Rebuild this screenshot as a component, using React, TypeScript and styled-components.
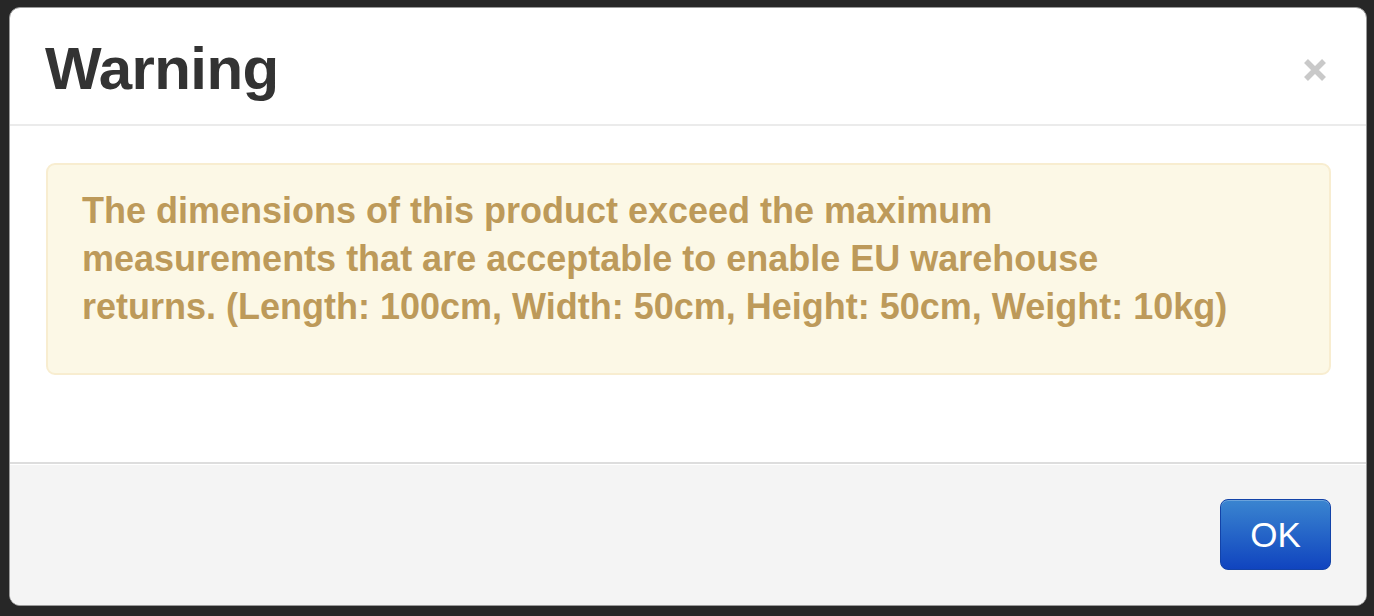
import styled, { createGlobalStyle } from 'styled-components';

const GlobalStyle = createGlobalStyle`
  html, body {
    margin: 0;
    padding: 0;
    background: #272727;
    font-family: "Liberation Sans", Arial, sans-serif;
  }
`;

const lines = [
  'The dimensions of this product exceed the maximum',
  'measurements that are acceptable to enable EU warehouse',
  'returns. (Length: 100cm, Width: 50cm, Height: 50cm, Weight: 10kg)',
];

const App = () => {
  return (
    <>
      <GlobalStyle />
      <Dialog>
        <Header>
          <Title>Warning</Title>
          <CloseButton aria-label="close">
            <svg width="26" height="26" viewBox="0 0 26 26">
              <path d="M4 4 L22 22 M22 4 L4 22" stroke="#c9c9c9" strokeWidth="5.5" />
            </svg>
          </CloseButton>
        </Header>
        <Body>
          <Alert>
            {lines.map((line) => (
              <AlertLine key={line}>{line}</AlertLine>
            ))}
          </Alert>
        </Body>
        <Footer>
          <OkButton>OK</OkButton>
        </Footer>
      </Dialog>
    </>
  );
};

export default App;

const Dialog = styled.div`
  margin: 7px 7px 0 9px;
  width: 1358px;
  height: 599px;
  box-sizing: border-box;
  display: flex;
  flex-direction: column;
  background: #fff;
  border: 1px solid #9a9a9a;
  border-radius: 11px;
  overflow: hidden;
`;

const Header = styled.header`
  height: 116px;
  flex: none;
  display: flex;
  align-items: center;
  justify-content: space-between;
  padding: 0 36px 0 35px;
  border-bottom: 2px solid #ebebeb;
`;

const Title = styled.h1`
  margin: 0;
  padding-top: 4px;
  font-size: 60px;
  font-weight: 700;
  letter-spacing: -0.6px;
  color: #333;
`;

const CloseButton = styled.button`
  border: 0;
  background: none;
  padding: 0;
  margin-right: 2px;
  margin-top: 8px;
  display: flex;
  cursor: pointer;
`;

const Body = styled.section`
  flex: 1;
  padding: 37px 35px 0 36px;
`;

const Alert = styled.div`
  height: 212px;
  box-sizing: border-box;
  padding: 22px 34px 0 34px;
  background: #fcf8e6;
  border: 2px solid #f8edd0;
  border-radius: 9px;
  color: #bd9a5a;
  font-size: 36px;
  font-weight: 700;
  line-height: 48px;
`;

const AlertLine = styled.div`
  white-space: nowrap;
`;

const Footer = styled.footer`
  height: 143px;
  flex: none;
  box-sizing: border-box;
  display: flex;
  justify-content: flex-end;
  align-items: flex-start;
  padding: 35px 35px 0;
  background: #f4f4f4;
  border-top: 2px solid #dddddd;
  box-shadow: inset 0 1px 0 #fff;
`;

const OkButton = styled.button`
  width: 111px;
  height: 71px;
  border: 1px solid #1343a8;
  border-radius: 8px;
  background: linear-gradient(#3a85d0, #1044bf);
  color: #fff;
  font-family: "Liberation Sans", Arial, sans-serif;
  font-size: 35px;
  padding: 0;
  cursor: pointer;
  box-shadow: inset 0 1px 0 rgba(255, 255, 255, 0.25);
`;
